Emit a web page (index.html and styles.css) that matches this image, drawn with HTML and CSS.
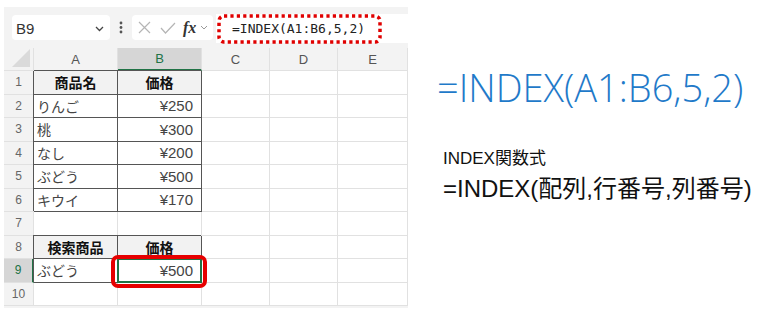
FILE: index.html
```html
<!DOCTYPE html>
<html lang="ja">
<head>
    <meta charset="UTF-8">
    <title>INDEX関数</title>
    <link rel="stylesheet" href="styles.css">
</head>
<body>
    <div class="page">
        <div class="excel">
            <div class="toolbar">
                <div class="namebox">
                    <span>B9</span>
                    <svg class="chev" width="9" height="6" viewBox="0 0 9 6"><path d="M1 1l3.5 3.5L8 1" fill="none" stroke="#444" stroke-width="1.3"/></svg>
                </div>
                <svg class="grip" width="4" height="13" viewBox="0 0 4 13"><circle cx="2" cy="2" r="1.4" fill="#555"/><circle cx="2" cy="6.5" r="1.4" fill="#555"/><circle cx="2" cy="11" r="1.4" fill="#555"/></svg>
                <div class="fxbox">
                    <svg width="13" height="13" viewBox="0 0 13 13"><path d="M1 1l11 11M12 1L1 12" stroke="#b5b5b5" stroke-width="1.2"/></svg>
                    <svg width="16" height="12" viewBox="0 0 16 12"><path d="M1 6l4.5 5L15 1" fill="none" stroke="#b5b5b5" stroke-width="1.2"/></svg>
                    <span class="fx">fx</span>
                    <svg width="8" height="5" viewBox="0 0 8 5"><path d="M1 1l3 3 3-3" fill="none" stroke="#999" stroke-width="1"/></svg>
                </div>
                <div class="formula">
                    <span>=INDEX(A1:B6,5,2)</span>
                    <svg class="dotframe" width="165" height="30" viewBox="0 0 165 30">
                        <rect x="2" y="2" width="161" height="26" rx="5" fill="none" stroke="#e00000" stroke-width="3.5" stroke-dasharray="3.2 3.2"/>
                    </svg>
                </div>
            </div>

            <div class="sheet">
                <div class="corner"></div>
                <div class="colhead">A</div>
                <div class="colhead active">B</div>
                <div class="colhead">C</div>
                <div class="colhead">D</div>
                <div class="colhead">E</div>

                <div class="rowhead">1</div>
                <div class="cell t head">商品名</div>
                <div class="cell t head">価格</div>
                <div class="cell"></div><div class="cell"></div><div class="cell"></div>

                <div class="rowhead">2</div>
                <div class="cell t">りんご</div>
                <div class="cell t num">¥250</div>
                <div class="cell"></div><div class="cell"></div><div class="cell"></div>

                <div class="rowhead">3</div>
                <div class="cell t">桃</div>
                <div class="cell t num">¥300</div>
                <div class="cell"></div><div class="cell"></div><div class="cell"></div>

                <div class="rowhead">4</div>
                <div class="cell t">なし</div>
                <div class="cell t num">¥200</div>
                <div class="cell"></div><div class="cell"></div><div class="cell"></div>

                <div class="rowhead">5</div>
                <div class="cell t">ぶどう</div>
                <div class="cell t num">¥500</div>
                <div class="cell"></div><div class="cell"></div><div class="cell"></div>

                <div class="rowhead">6</div>
                <div class="cell t">キウイ</div>
                <div class="cell t num">¥170</div>
                <div class="cell"></div><div class="cell"></div><div class="cell"></div>

                <div class="rowhead">7</div>
                <div class="cell"></div><div class="cell"></div>
                <div class="cell"></div><div class="cell"></div><div class="cell"></div>

                <div class="rowhead">8</div>
                <div class="cell t head">検索商品</div>
                <div class="cell t head">価格</div>
                <div class="cell"></div><div class="cell"></div><div class="cell"></div>

                <div class="rowhead active">9</div>
                <div class="cell t">ぶどう</div>
                <div class="cell t num selected">¥500<span class="callout"></span></div>
                <div class="cell"></div><div class="cell"></div><div class="cell"></div>

                <div class="rowhead">10</div>
                <div class="cell"></div><div class="cell"></div>
                <div class="cell"></div><div class="cell"></div><div class="cell"></div>
            </div>
        </div>

        <div class="notes">
            <div class="big-formula">=INDEX(A1:B6,5,2)</div>
            <div class="syntax-label">INDEX関数式</div>
            <div class="syntax">=INDEX(配列,行番号,列番号)</div>
        </div>
    </div>
</body>
</html>
```

FILE: styles.css
```css
body {
    margin: 0;
    background: #ffffff;
    font-family: 'Liberation Sans', 'Noto Sans CJK JP', sans-serif;
}
.page {
    display: flex;
    padding: 7px 0 0 4px;
}
.excel {
    width: 404px;
    background: #f3f3f3;
    padding-bottom: 2px;
}

/* formula bar */
.toolbar {
    display: flex;
    align-items: center;
    height: 41px;
    padding-left: 8px;
}
.namebox {
    display: flex;
    align-items: center;
    justify-content: space-between;
    width: 98px;
    height: 25px;
    box-sizing: border-box;
    padding: 2px 6px 0 4px;
    background: #ffffff;
    border-radius: 4px;
    font-size: 15px;
    color: #333;
}
.grip {
    margin: 0 9px 0 9px;
}
.fxbox {
    display: flex;
    align-items: center;
    width: 81px;
    height: 25px;
    box-sizing: border-box;
    padding: 0 3px 0 6px;
    background: #ffffff;
    border-radius: 4px;
}
.fxbox svg:nth-child(2) {
    margin-left: 9px;
}
.fx {
    margin-left: 7px;
    margin-right: 4px;
    font-family: 'Liberation Serif', serif;
    font-style: italic;
    font-weight: bold;
    font-size: 16px;
    color: #333;
}
.formula {
    position: relative;
    flex: 1;
    display: flex;
    align-items: center;
    height: 29px;
    margin-left: 3px;
    margin-top: 1px;
    padding-left: 16px;
    background: #ffffff;
    font-family: 'DejaVu Sans Mono', monospace;
    font-size: 13px;
    color: #222;
}
.dotframe {
    position: absolute;
    left: 1px;
    top: 0;
}

/* grid */
.sheet {
    display: grid;
    grid-template-columns: 30px 84px 84px 68px 68px 70px;
    grid-template-rows: 23px repeat(10, 23.5px);
    background: #ffffff;
}
.sheet > div {
    box-sizing: border-box;
    border-right: 1px solid #e1e1e1;
    border-bottom: 1px solid #e1e1e1;
}
.corner {
    background: #f3f3f3;
    position: relative;
}
.corner::after {
    content: '';
    position: absolute;
    right: 3px;
    bottom: 3px;
    border-left: 18px solid transparent;
    border-bottom: 18px solid #dadada;
}
.colhead {
    display: flex;
    align-items: center;
    justify-content: center;
    background: #f3f3f3;
    font-size: 13px;
    color: #555;
}
.colhead.active {
    background: #d6d6d6;
    color: #217346;
    border-bottom: 2px solid #217346 !important;
}
.rowhead {
    display: flex;
    align-items: center;
    justify-content: center;
    background: #f3f3f3;
    font-size: 12px;
    color: #666;
}
.rowhead.active {
    background: #d6d6d6;
    color: #217346;
    border-right: 2px solid #217346 !important;
}
.cell {
    display: flex;
    align-items: center;
    padding: 0 3px;
    font-size: 14px;
    color: #444;
}
.cell.t {
    border-right-color: #555;
    border-bottom-color: #555;
    box-shadow: -1px -1px 0 #555;
}
.cell.head {
    justify-content: center;
    background: #f2f2f2;
    font-weight: bold;
    color: #111;
}
.cell.num {
    justify-content: flex-end;
    padding-right: 8px;
    font-size: 15px;
}
.selected {
    position: relative;
}
.selected::after {
    content: '';
    position: absolute;
    inset: -1px;
    border: 2px solid #217346;
}
.callout {
    position: absolute;
    left: -7px;
    right: -6px;
    top: -4px;
    bottom: -6px;
    border: 4px solid #e60000;
    border-radius: 7px;
    z-index: 2;
}

/* right side */
.notes {
    padding: 60px 0 0 29px;
}
.big-formula {
    font-family: 'Open Sans', sans-serif;
    font-weight: 300;
    font-size: 38px;
    line-height: 40px;
    color: #1f7ac9;
}
.syntax-label {
    margin: 42px 0 0 6px;
    font-size: 17px;
    line-height: 20px;
    color: #111;
}
.syntax {
    margin: 6px 0 0 6px;
    font-size: 24px;
    line-height: 28px;
    color: #111;
}
```
